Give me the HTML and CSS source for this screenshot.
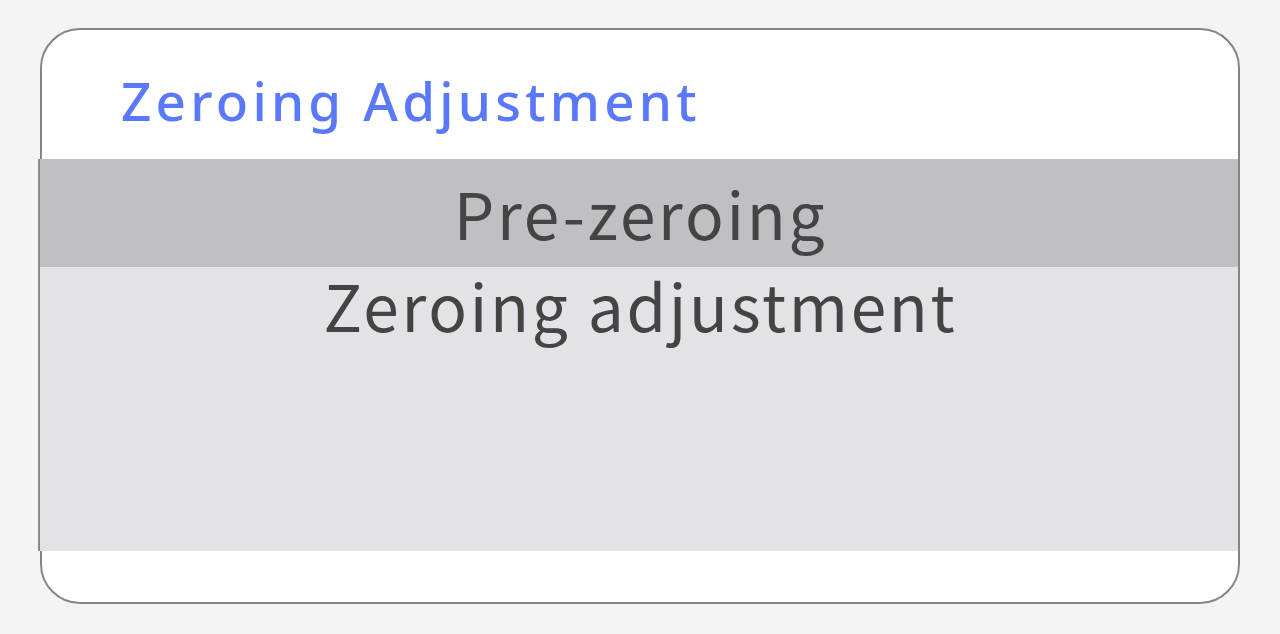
FILE: index.html
```html
<!DOCTYPE html>
<html lang="en">
<head>
    <meta charset="UTF-8">
    <meta name="viewport" content="width=device-width, initial-scale=1.0">
    <title>Zeroing Adjustment</title>
    <link rel="stylesheet" href="styles.css">
</head>
<body>
    <div class="dialog">
        <div class="title">Zeroing Adjustment</div>

        <div class="picker">
            <div class="option selected">Pre-zeroing</div>
            <div class="option">Zeroing adjustment</div>
        </div>
    </div>
</body>
</html>
```

FILE: styles.css
```css
body {
    margin: 0;
    padding: 28px 40px 0;
    background: #f4f4f4;
    font-family: "Noto Sans CJK SC", "Noto Sans", sans-serif;
}

.dialog {
    width: 1200px;
    height: 576px;
    box-sizing: border-box;
    border: 2px solid #858585;
    border-radius: 40px;
    background: #fff;
    padding-top: 38px;
}
.title {
    font-family: "Noto Sans", sans-serif;
    font-size: 53px;
    line-height: 65px;
    font-weight: 500;
    letter-spacing: 4.2px;
    color: #5a78fa;
    padding-left: 79px;
    margin-bottom: 26px;
}
.picker {
    height: 392px;
    margin-left: -4px;
    border-left: 2px solid #8a8a8a;
    background: #e3e3e7;
    padding-top: 7px;
    box-sizing: border-box;
}
.option {
    font-size: 64px;
    letter-spacing: 2.7px;
    padding-left: 3px;
    color: #444;
    text-align: center;
}
.option.selected {
    background: #c0bfc4;
    margin-top: -7px;
    padding-top: 7px;
    padding-bottom: 9px;
    margin-bottom: -9px;
}
```
